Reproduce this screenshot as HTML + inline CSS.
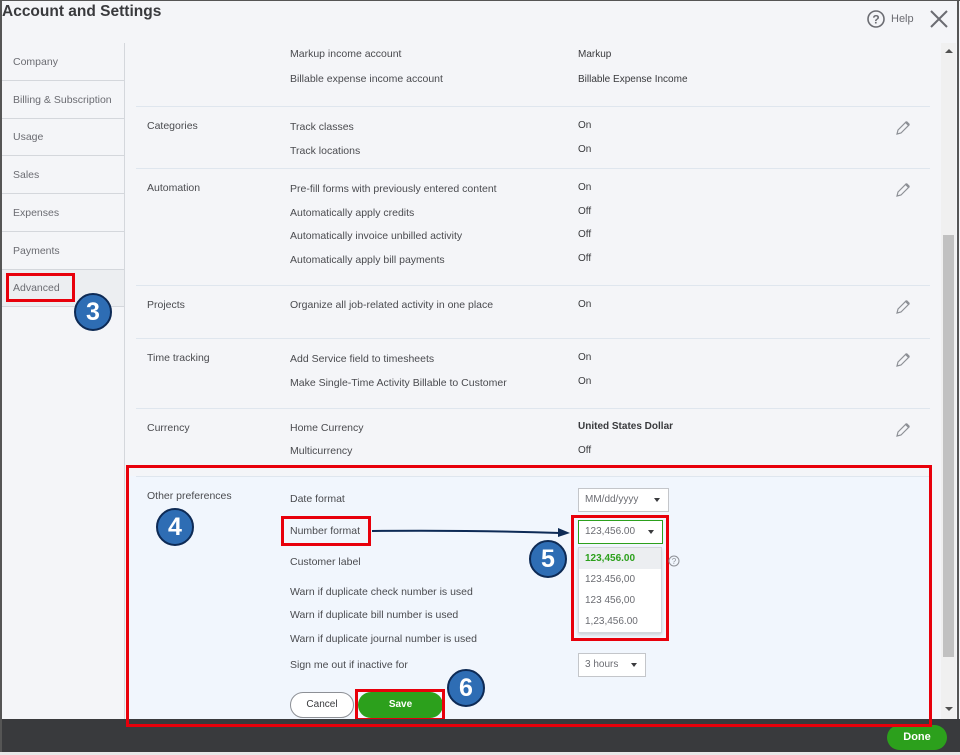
<!DOCTYPE html>
<html><head><style>
*{margin:0;padding:0;box-sizing:border-box}
body{width:960px;height:755px;overflow:hidden;background:#f4f5f8;font-family:"Liberation Sans",sans-serif;color:#393a3d;position:relative}
.a{position:absolute;white-space:nowrap}
.t{font-size:10.5px;color:#4a4b4f}
.s{font-size:10px;color:#393a3d}
.sb{position:absolute;left:2px;width:122px;border-bottom:1px solid #d4d7dc;font-size:10.5px;color:#6b6c72;padding-left:11px}
.hr{position:absolute;left:136px;width:794px;height:1px;background:#dfe6ee}
.dd{position:absolute;background:#fff;border:1px solid #c4c6ca;font-size:10px;color:#6b6c72;padding-left:6px}
.car{position:absolute;right:8px;top:50%;margin-top:-2px;border-left:3.5px solid transparent;border-right:3.5px solid transparent;border-top:4px solid #393a3d}
.c{position:absolute;width:38px;height:38px;border-radius:50%;background:#2e6db4;border:2px solid #0d2a55;color:#fff;font-weight:bold;font-size:25px;text-align:center;line-height:34px}
.r{position:absolute;border:3px solid #e8000b}
.pen{position:absolute;left:895px}
</style></head><body>
<div class="a" style="left:0;top:0;width:2px;height:755px;background:#555"></div>
<div class="a" style="left:957px;top:0;width:2px;height:755px;background:#555"></div>
<div class="a" style="left:0;top:0;width:960px;height:1px;background:#555"></div>
<div class="a" style="left:2px;top:3px;font-size:15.5px;font-weight:bold;color:#393a3d">Account and Settings</div>
<svg class="a" style="left:866px;top:9px" width="20" height="20"><circle cx="10" cy="10" r="8" fill="none" stroke="#6b6c72" stroke-width="1.6"/><text x="10" y="14.5" font-size="12" text-anchor="middle" fill="#6b6c72" font-family="Liberation Sans" font-weight="bold">?</text></svg>
<div class="a" style="left:891px;top:13px;font-size:11px;color:#6b6c72">Help</div>
<svg class="a" style="left:929px;top:9px" width="20" height="20"><path d="M2 2L18 18M18 2L2 18" stroke="#6b6c72" stroke-width="2"/></svg>

<div class="a" style="left:124px;top:43px;width:1px;height:676px;background:#d4d7dc"></div>
<div class="sb" style="top:43px;height:38px;line-height:38px">Company</div>
<div class="sb" style="top:81px;height:38px;line-height:38px">Billing &amp; Subscription</div>
<div class="sb" style="top:119px;height:37px;line-height:37px">Usage</div>
<div class="sb" style="top:156px;height:38px;line-height:38px">Sales</div>
<div class="sb" style="top:194px;height:38px;line-height:38px">Expenses</div>
<div class="sb" style="top:232px;height:38px;line-height:38px">Payments</div>
<div class="sb" style="top:270px;height:37px;line-height:37px;background:#eceef1">Advanced</div>
<div class="r" style="left:6px;top:273px;width:69px;height:29px"></div>
<div class="c" style="left:74px;top:293px">3</div>

<div class="a" style="left:941px;top:43px;width:15px;height:676px;background:#f0f0f0"></div>
<div class="a" style="left:945px;top:49px;border-left:4px solid transparent;border-right:4px solid transparent;border-bottom:4px solid #505050"></div>
<div class="a" style="left:943px;top:235px;width:11px;height:422px;background:#c1c1c1"></div>
<div class="a" style="left:945px;top:707px;border-left:4px solid transparent;border-right:4px solid transparent;border-top:4px solid #505050"></div>

<div class="a t" style="left:290px;top:48px">Markup income account</div>
<div class="a s" style="left:578px;top:49px">Markup</div>
<div class="a t" style="left:290px;top:73px">Billable expense income account</div>
<div class="a s" style="left:578px;top:74px">Billable Expense Income</div>
<div class="hr" style="top:106px"></div>
<div class="a t" style="left:147px;top:120px">Categories</div>
<div class="a t" style="left:290px;top:121px">Track classes</div><div class="a s" style="left:578px;top:120px">On</div>
<div class="a t" style="left:290px;top:145px">Track locations</div><div class="a s" style="left:578px;top:144px">On</div>
<div class="hr" style="top:168px"></div>
<div class="a t" style="left:147px;top:182px">Automation</div>
<div class="a t" style="left:290px;top:183px">Pre-fill forms with previously entered content</div><div class="a s" style="left:578px;top:182px">On</div>
<div class="a t" style="left:290px;top:207px">Automatically apply credits</div><div class="a s" style="left:578px;top:206px">Off</div>
<div class="a t" style="left:290px;top:230px">Automatically invoice unbilled activity</div><div class="a s" style="left:578px;top:229px">Off</div>
<div class="a t" style="left:290px;top:254px">Automatically apply bill payments</div><div class="a s" style="left:578px;top:253px">Off</div>
<div class="hr" style="top:285px"></div>
<div class="a t" style="left:147px;top:299px">Projects</div>
<div class="a t" style="left:290px;top:299px">Organize all job-related activity in one place</div><div class="a s" style="left:578px;top:299px">On</div>
<div class="hr" style="top:338px"></div>
<div class="a t" style="left:147px;top:352px">Time tracking</div>
<div class="a t" style="left:290px;top:353px">Add Service field to timesheets</div><div class="a s" style="left:578px;top:352px">On</div>
<div class="a t" style="left:290px;top:377px">Make Single-Time Activity Billable to Customer</div><div class="a s" style="left:578px;top:376px">On</div>
<div class="hr" style="top:408px"></div>
<div class="a t" style="left:147px;top:422px">Currency</div>
<div class="a t" style="left:290px;top:422px">Home Currency</div><div class="a s" style="left:578px;top:421px;font-weight:bold">United States Dollar</div>
<div class="a t" style="left:290px;top:445px">Multicurrency</div><div class="a s" style="left:578px;top:445px">Off</div>

<svg class="pen" style="top:120px" width="16" height="16"><path d="M2 14L3 10L11 2L14 5L6 13Z" fill="none" stroke="#8d9096" stroke-width="1.2"/><path d="M11 2L14 5" stroke="#8d9096" stroke-width="2.5"/></svg>
<svg class="pen" style="top:182px" width="16" height="16"><path d="M2 14L3 10L11 2L14 5L6 13Z" fill="none" stroke="#8d9096" stroke-width="1.2"/><path d="M11 2L14 5" stroke="#8d9096" stroke-width="2.5"/></svg>
<svg class="pen" style="top:299px" width="16" height="16"><path d="M2 14L3 10L11 2L14 5L6 13Z" fill="none" stroke="#8d9096" stroke-width="1.2"/><path d="M11 2L14 5" stroke="#8d9096" stroke-width="2.5"/></svg>
<svg class="pen" style="top:352px" width="16" height="16"><path d="M2 14L3 10L11 2L14 5L6 13Z" fill="none" stroke="#8d9096" stroke-width="1.2"/><path d="M11 2L14 5" stroke="#8d9096" stroke-width="2.5"/></svg>
<svg class="pen" style="top:422px" width="16" height="16"><path d="M2 14L3 10L11 2L14 5L6 13Z" fill="none" stroke="#8d9096" stroke-width="1.2"/><path d="M11 2L14 5" stroke="#8d9096" stroke-width="2.5"/></svg>

<div class="a" style="left:128px;top:476px;width:802px;height:243px;background:#f1f6fd"></div>
<div class="hr" style="top:476px"></div>
<div class="a t" style="left:147px;top:490px">Other preferences</div>
<div class="c" style="left:156px;top:508px">4</div>
<div class="a t" style="left:290px;top:493px">Date format</div>
<div class="a t" style="left:290px;top:525px">Number format</div>
<div class="r" style="left:281px;top:516px;width:90px;height:30px"></div>
<div class="a t" style="left:290px;top:556px">Customer label</div>
<div class="a t" style="left:290px;top:586px">Warn if duplicate check number is used</div>
<div class="a t" style="left:290px;top:609px">Warn if duplicate bill number is used</div>
<div class="a t" style="left:290px;top:633px">Warn if duplicate journal number is used</div>
<div class="a t" style="left:290px;top:659px">Sign me out if inactive for</div>
<div class="dd" style="left:578px;top:488px;width:91px;height:24px;line-height:22px">MM/dd/yyyy<span class="car"></span></div>
<svg class="a" style="left:372px;top:525px" width="200" height="14"><path d="M0 6Q100 5 188 8" stroke="#0d2a55" stroke-width="2" fill="none"/><path d="M186 3L198 8L186 12Z" fill="#0d2a55"/></svg>
<div class="dd" style="left:578px;top:520px;width:85px;height:24px;line-height:22px;border-color:#2ca01c">123,456.00<span class="car"></span></div>
<div class="a" style="left:578px;top:547px;width:84px;height:86px;background:#fff;border:1px solid #d4d7dc;box-shadow:0 2px 3px rgba(0,0,0,.15);font-size:10px;color:#6b6c72">
<div style="height:21px;line-height:21px;padding-left:6px;background:#eceef1;color:#2ca01c;font-weight:bold">123,456.00</div>
<div style="height:21px;line-height:21px;padding-left:6px">123.456,00</div>
<div style="height:21px;line-height:21px;padding-left:6px">123 456,00</div>
<div style="height:21px;line-height:21px;padding-left:6px">1,23,456.00</div>
</div>
<div class="r" style="left:571px;top:515px;width:98px;height:126px"></div>
<div class="c" style="left:529px;top:540px">5</div>
<svg class="a" style="left:668px;top:555px" width="12" height="12"><circle cx="6" cy="6" r="5" fill="none" stroke="#8d9096"/><text x="6" y="9" font-size="8" text-anchor="middle" fill="#8d9096" font-family="Liberation Sans">?</text></svg>
<div class="dd" style="left:578px;top:653px;width:68px;height:24px;line-height:22px">3 hours<span class="car"></span></div>
<div class="a" style="left:290px;top:692px;width:64px;height:26px;border:1px solid #8d9096;border-radius:13px;background:#fff;font-size:10px;text-align:center;line-height:24px;color:#393a3d">Cancel</div>
<div class="a" style="left:358px;top:692px;width:85px;height:26px;border-radius:13px;background:#2ca01c;font-size:10px;font-weight:bold;color:#fff;text-align:center;line-height:26px">Save</div>
<div class="r" style="left:355px;top:689px;width:90px;height:32px"></div>
<div class="c" style="left:447px;top:669px">6</div>

<div class="a" style="left:2px;top:719px;width:958px;height:33px;background:#393a3d"></div>
<div class="a" style="left:0;top:752px;width:960px;height:3px;background:#e8e8e8"></div>
<div class="a" style="left:887px;top:725px;width:60px;height:25px;border-radius:13px;background:#2ca01c;color:#fff;font-size:11px;font-weight:bold;text-align:center;line-height:25px">Done</div>
<div class="r" style="left:126px;top:465px;width:806px;height:262px"></div>
</body></html>
